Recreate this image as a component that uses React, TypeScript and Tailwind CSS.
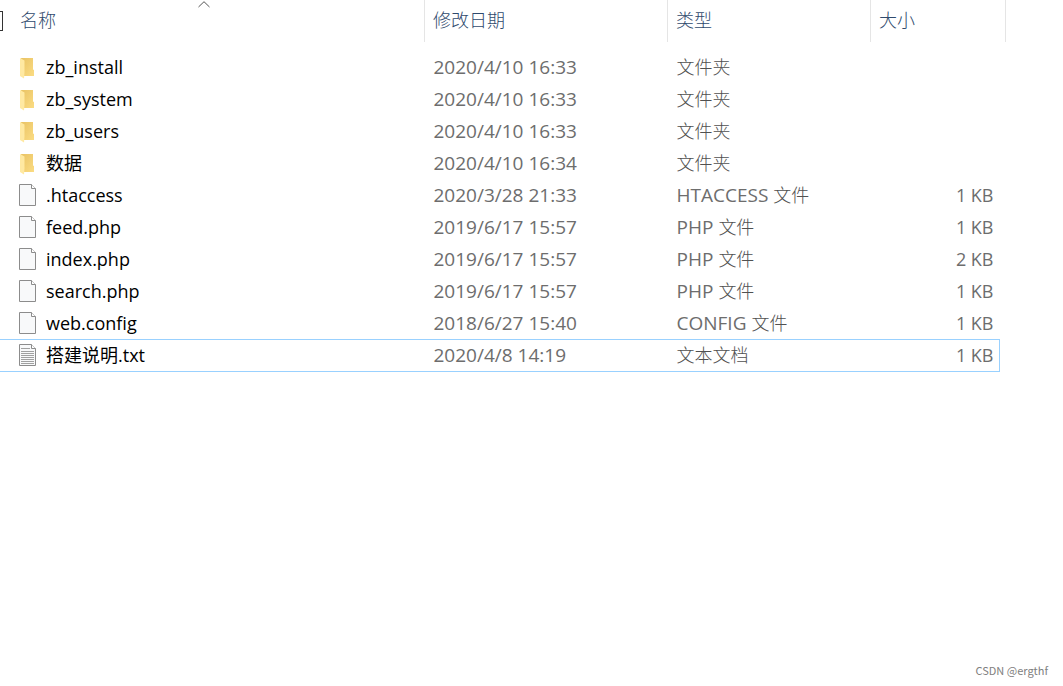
import clsx from "clsx";

type FileKind = "folder" | "blank" | "text";

type FileEntry = {
  name: string;
  modified: string;
  format?: string;
  label: string;
  size?: string;
  kind: FileKind;
  focused?: boolean;
};

const FILES: FileEntry[] = [
  { name: "zb_install", modified: "2020/4/10 16:33", label: "文件夹", kind: "folder" },
  { name: "zb_system", modified: "2020/4/10 16:33", label: "文件夹", kind: "folder" },
  { name: "zb_users", modified: "2020/4/10 16:33", label: "文件夹", kind: "folder" },
  { name: "数据", modified: "2020/4/10 16:34", label: "文件夹", kind: "folder" },
  { name: ".htaccess", modified: "2020/3/28 21:33", format: "HTACCESS", label: "文件", size: "1 KB", kind: "blank" },
  { name: "feed.php", modified: "2019/6/17 15:57", format: "PHP", label: "文件", size: "1 KB", kind: "blank" },
  { name: "index.php", modified: "2019/6/17 15:57", format: "PHP", label: "文件", size: "2 KB", kind: "blank" },
  { name: "search.php", modified: "2019/6/17 15:57", format: "PHP", label: "文件", size: "1 KB", kind: "blank" },
  { name: "web.config", modified: "2018/6/27 15:40", format: "CONFIG", label: "文件", size: "1 KB", kind: "blank" },
  { name: "搭建说明.txt", modified: "2020/4/8 14:19", label: "文本文档", size: "1 KB", kind: "text", focused: true },
];

function FolderIcon() {
  return (
    <svg width="18" height="24" viewBox="0 0 18 24" aria-hidden="true" className="shrink-0">
      <defs>
        <linearGradient id="folder-back" x1="0" y1="0" x2="1" y2="1">
          <stop offset="0" stopColor="#e9c364" />
          <stop offset="1" stopColor="#fbdc83" />
        </linearGradient>
      </defs>
      <path d="M2 3H14V14.5L15 15V21H5Z" fill="url(#folder-back)" />
      <path d="M1 3L5.5 5.5V17.5L5 23.5L1 21Z" fill="#ffe9a2" />
    </svg>
  );
}

function DocumentIcon({ lined = false }: { lined?: boolean }) {
  return (
    <svg width="18" height="24" viewBox="0 0 18 24" aria-hidden="true" className="shrink-0">
      <path d="M0.5 1.5H12.5L16.5 5.5V22.5H0.5Z" fill="#f8f9fa" stroke="#8c8c8c" />
      <path d="M12.5 1.5V5.5H16.5" fill="#fff" stroke="#8c8c8c" />
      {lined && (
        <path
          d="M2 5.5H11M2 8.5H15M2 10.5H15M2 12.5H15M2 14.5H15M2 16.5H15M2 18.5H15M2 20.5H15"
          stroke="#a0a0a0"
        />
      )}
    </svg>
  );
}

function FileRow({ file }: { file: FileEntry }) {
  const cell = clsx(
    "-mb-px flex h-[33px] items-center border-y pb-0.5",
    file.focused ? "border-[#99d1ff]" : "border-transparent",
  );

  return (
    <tr className="h-8">
      <td className="p-0">
        <div className={clsx(cell, "gap-[9px] pl-[19px] text-[18px] text-black")}>
          {file.kind === "folder" ? <FolderIcon /> : <DocumentIcon lined={file.kind === "text"} />}
          <span>{file.name}</span>
        </div>
      </td>
      <td className="p-0">
        <div className={clsx(cell, "pl-[9px]")}>{file.modified}</div>
      </td>
      <td className="p-0">
        <div className={clsx(cell, "gap-[5px] pl-[9px]")}>
          {file.format && <span>{file.format}</span>}
          <span className="text-[18px] font-light text-[#505050]">{file.label}</span>
        </div>
      </td>
      <td className="p-0 pr-1.5">
        <div className={clsx(cell, "justify-end border-r pr-[5px] text-[18px]")}>{file.size}</div>
      </td>
    </tr>
  );
}

export default function App() {
  return (
    <main className="flex min-h-screen flex-col justify-between overflow-hidden bg-white font-['Open_Sans','Noto_Sans_CJK_SC',sans-serif] text-[19px] leading-8 text-[#6d6d6d]">
      <div className="pr-[57px]">
        <table className="w-full table-fixed border-collapse">
          <colgroup>
            <col />
            <col className="w-[243px]" />
            <col className="w-[203px]" />
            <col className="w-[135px]" />
          </colgroup>
          <thead className="text-[18px] text-[#2f4a6d]">
            <tr className="h-[42px]">
              <th className="relative border-r border-[#e5e5e5] p-0 text-left font-light">
                <div className="flex items-center gap-[17px]">
                  <input
                    type="checkbox"
                    aria-label="全选"
                    className="-ml-[17px] h-5 w-5 appearance-none border border-[#333333] bg-white"
                  />
                  <button type="button" className="pb-0.5">名称</button>
                </div>
                {/* ascending sort marker */}
                <svg
                  width="12"
                  height="7"
                  viewBox="0 0 12 7"
                  fill="none"
                  aria-hidden="true"
                  className="absolute top-px left-[198px]"
                >
                  <path d="M0.5 6L6 0.7L11.5 6" stroke="#555555" />
                </svg>
              </th>
              <th className="border-r border-[#e5e5e5] p-0 pl-2 text-left font-light">
                <button type="button" className="pb-0.5">修改日期</button>
              </th>
              <th className="border-r border-[#e5e5e5] p-0 pl-2 text-left font-light">
                <button type="button" className="pb-0.5">类型</button>
              </th>
              <th className="border-r border-[#e5e5e5] p-0 pl-2 text-left font-light">
                <button type="button" className="pb-0.5">大小</button>
              </th>
            </tr>
          </thead>
          <tbody>
            <tr aria-hidden="true" className="h-[9px]">
              <td colSpan={4} className="p-0" />
            </tr>
            {FILES.map((file) => (
              <FileRow key={file.name} file={file} />
            ))}
          </tbody>
        </table>
      </div>

      <footer className="px-[15px] pb-1 text-right font-['Noto_Sans_CJK_SC',sans-serif] text-[11px] leading-6 text-[#808080]">
        CSDN @ergthf
      </footer>
    </main>
  );
}
